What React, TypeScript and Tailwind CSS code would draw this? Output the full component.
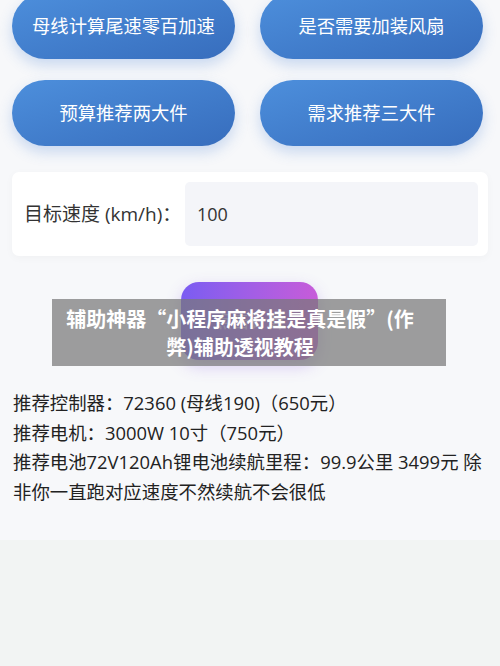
const buttons = ["母线计算尾速零百加速", "是否需要加装风扇", "预算推荐两大件", "需求推荐三大件"];

const results = [
  "推荐控制器：72360 (母线190)（650元）",
  "推荐电机：3000W 10寸（750元）",
  "推荐电池72V120Ah锂电池续航里程：99.9公里 3499元 除非你一直跑对应速度不然续航不会很低",
];

export default function App() {
  return (
    <div className="relative h-[666px] w-[500px] overflow-hidden bg-[#f2f4f3] font-['Open_Sans','Noto_Sans_CJK_SC',sans-serif]">
      <div className="flow-root h-[540px] bg-[#f7f8fa]">
        <div className="-mt-[7px] grid grid-cols-2 gap-x-[25px] gap-y-[21px] pl-[12px] pr-[17px]">
          {buttons.map((label) => (
            <button
              key={label}
              className="flex h-[66px] items-center justify-center rounded-full bg-gradient-to-br from-[#4d8fdc] to-[#376dbd] text-[18.3px] text-white shadow-[0_6px_14px_rgba(60,120,210,0.25)]"
            >
              {label}
            </button>
          ))}
        </div>

        <div className="mx-[12px] mt-[26px] flex h-[84px] items-center rounded-[7px] bg-white pl-[12px] pr-[10px] shadow-[0_2px_8px_rgba(0,0,0,0.03)]">
          <span className="w-[161px] whitespace-nowrap text-[19px] text-[#333]">目标速度 (km/h)：</span>
          <div className="flex h-[64px] flex-1 items-center rounded-[5px] bg-[#f4f5f9] pl-[12px] text-[18px] text-[#333]">
            100
          </div>
        </div>

        <div className="mt-[26px] flex justify-center pr-[1px]">
          <button className="h-[78px] w-[137px] rounded-[18px] bg-gradient-to-r from-[#7a5cf2] to-[#c75bd9] text-[18px] text-white/60 shadow-[0_6px_16px_rgba(140,90,230,0.3)]">
            点击计算
          </button>
        </div>

        <div className="mt-[28px] pl-[13px] pr-[10px] text-[18.4px] leading-[29.5px] text-[#222]">
          {results.map((line) => (
            <p key={line}>{line}</p>
          ))}
        </div>
      </div>

      <div className="absolute left-[52px] top-[299px] flex h-[67px] w-[394px] flex-col items-center justify-center bg-[rgba(120,120,120,0.72)] pr-[18px] text-center font-['Noto_Sans_CJK_SC',sans-serif] text-[20px] font-bold leading-[28px] text-white">
        <p>辅助神器“小程序麻将挂是真是假”(作</p>
        <p>弊)辅助透视教程</p>
      </div>
    </div>
  );
}
